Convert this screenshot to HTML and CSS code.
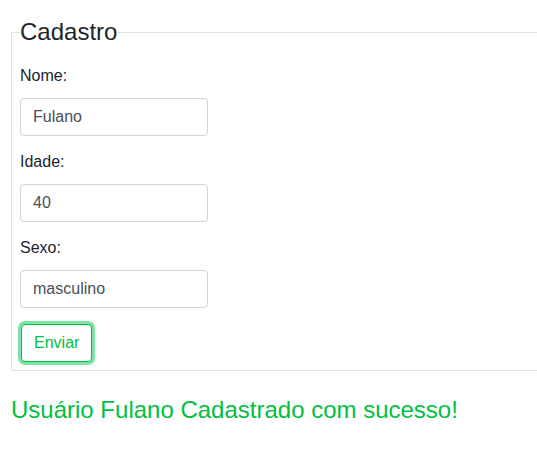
FILE: index.html
```html
<!DOCTYPE html>
<html lang="pt-BR">
<head>
    <meta charset="UTF-8">
    <meta name="viewport" content="width=device-width, initial-scale=1.0">
    <title>Cadastro</title>
    <link rel="stylesheet" href="styles.css">
</head>
<body>
    <form class="cadastro">
        <fieldset class="cadastro-box">
            <legend class="cadastro-title">Cadastro</legend>

            <div class="field">
                <label class="field-label" for="nome">Nome:</label>
                <input class="field-input" id="nome" type="text" value="Fulano">
            </div>

            <div class="field">
                <label class="field-label" for="idade">Idade:</label>
                <input class="field-input" id="idade" type="text" value="40">
            </div>

            <div class="field">
                <label class="field-label" for="sexo">Sexo:</label>
                <input class="field-input" id="sexo" type="text" value="masculino">
            </div>

            <button class="btn-enviar" type="button">Enviar</button>
        </fieldset>
    </form>

    <p class="mensagem">Usuário Fulano Cadastrado com sucesso!</p>
</body>
</html>
```

FILE: styles.css
```css
body {
    font-family: "Liberation Sans", Arial, sans-serif;
    font-size: 16px;
    line-height: 1.5;
    color: #212529;
    background-color: white;
    margin: 0;
    padding: 18px 0 0 11px;
}

.cadastro {
    margin: 0;
}

/* the box runs off the right side in the original, so no right border */
.cadastro-box {
    margin: 0;
    padding: 0 8px 6px 8px;
    border: 1px solid #dee2e6;
    border-right: none;
    border-radius: 0;
}

.cadastro-title {
    padding: 0;
    font-size: 24px;
    line-height: 28px;
    color: #212529;
}

.field {
    margin-top: 14px;
}

.cadastro-title + .field {
    margin-top: 18px;
}

.field-label {
    display: block;
    margin-bottom: 10px;
}

.field-input {
    display: block;
    box-sizing: border-box;
    width: 188px;
    height: 38px;
    padding: 6px 12px;
    font-family: inherit;
    font-size: 16px;
    color: #495057;
    background-color: white;
    border: 1px solid #ced4da;
    border-radius: 4px;
}

.btn-enviar {
    margin: 16px 0 2px 1px;
    box-sizing: border-box;
    height: 38px;
    padding: 6px 12px;
    font-family: inherit;
    font-size: 16px;
    color: #00c040;
    background-color: white;
    border: 1px solid #00c040;
    border-radius: 4px;
    box-shadow: 0 0 0 3px rgba(0, 200, 80, 0.5);
}

.mensagem {
    margin: 25px 0 0 0;
    font-size: 24px;
    line-height: 1.2;
    color: #00c040;
}
```
